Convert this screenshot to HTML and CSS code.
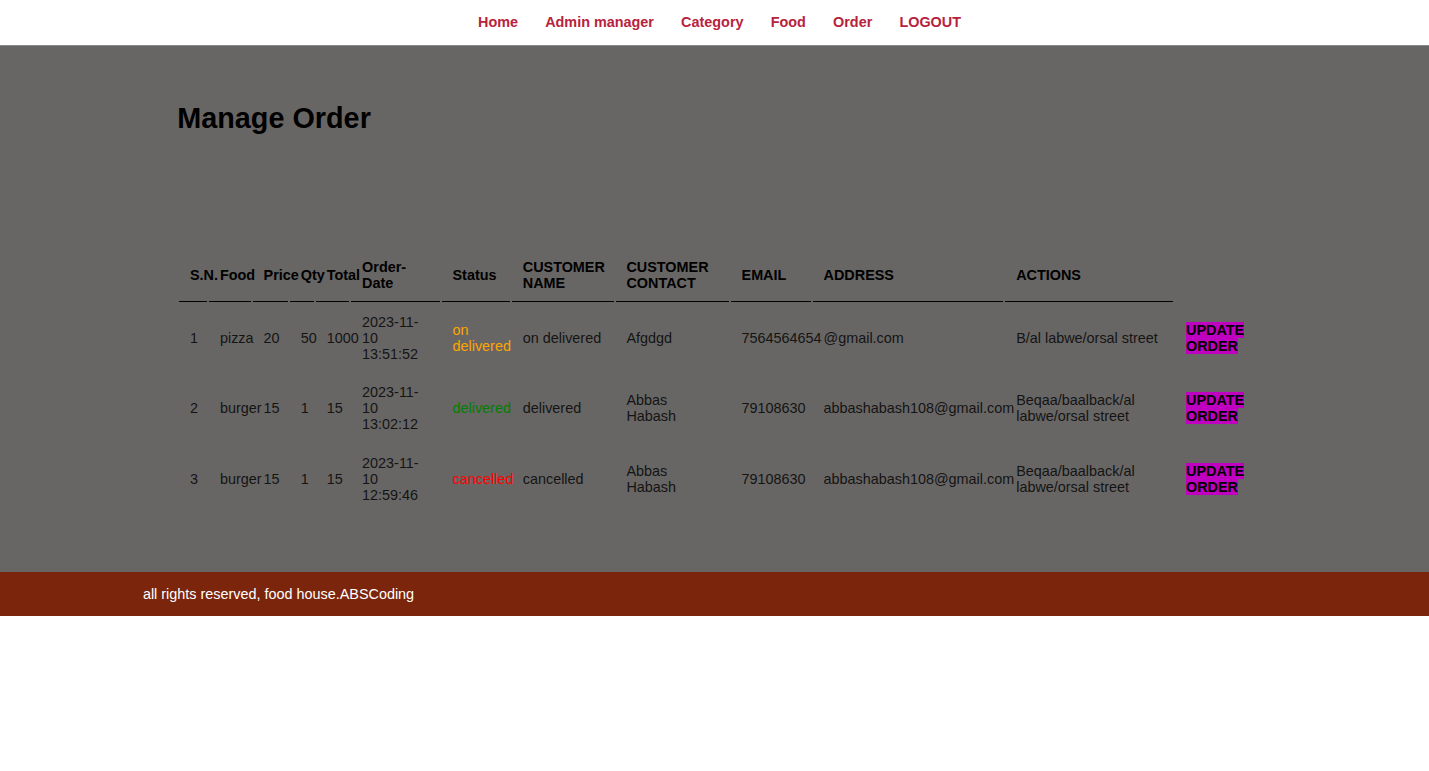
FILE: index.html
```html
<!DOCTYPE html>
<html lang="en">
<head>
<meta charset="utf-8">
<title>Manage Order</title>
<link rel="stylesheet" href="styles.css">
</head>
<body>
<div class="menu">
  <ul class="menu-list">
    <li><a href="#">Home</a></li>
    <li><a href="#">Admin manager</a></li>
    <li><a href="#">Category</a></li>
    <li><a href="#">Food</a></li>
    <li><a href="#">Order</a></li>
    <li><a href="#">LOGOUT</a></li>
  </ul>
</div>

<div class="main-content">
  <div class="wrapper">
    <div class="inner">
      <h1 class="title">Manage Order</h1>
      <table class="tbl-full">
        <tr>
          <th>S.N.</th>
          <th>Food</th>
          <th>Price</th>
          <th>Qty</th>
          <th>Total</th>
          <th>Order-Date</th>
          <th>Status</th>
          <th class="caps">CUSTOMER NAME</th>
          <th class="caps">CUSTOMER CONTACT</th>
          <th class="caps">EMAIL</th>
          <th class="caps">ADDRESS</th>
          <th class="caps">ACTIONS</th>
        </tr>
        <tr>
          <td>1</td>
          <td>pizza</td>
          <td>20</td>
          <td>50</td>
          <td>1000</td>
          <td>2023-11-10 13:51:52</td>
          <td><span class="st-orange">on delivered</span></td>
          <td>on delivered</td>
          <td>Afgdgd</td>
          <td>7564564654</td>
          <td>@gmail.com</td>
          <td>B/al labwe/orsal street</td>
          <td><a href="#" class="btn-update">UPDATE ORDER</a></td>
        </tr>
        <tr>
          <td>2</td>
          <td>burger</td>
          <td>15</td>
          <td>1</td>
          <td>15</td>
          <td>2023-11-10 13:02:12</td>
          <td><span class="st-green">delivered</span></td>
          <td>delivered</td>
          <td>Abbas Habash</td>
          <td>79108630</td>
          <td>abbashabash108@gmail.com</td>
          <td>Beqaa/baalback/al labwe/orsal street</td>
          <td><a href="#" class="btn-update">UPDATE ORDER</a></td>
        </tr>
        <tr>
          <td>3</td>
          <td>burger</td>
          <td>15</td>
          <td>1</td>
          <td>15</td>
          <td>2023-11-10 12:59:46</td>
          <td><span class="st-red">cancelled</span></td>
          <td>cancelled</td>
          <td>Abbas Habash</td>
          <td>79108630</td>
          <td>abbashabash108@gmail.com</td>
          <td>Beqaa/baalback/al labwe/orsal street</td>
          <td><a href="#" class="btn-update">UPDATE ORDER</a></td>
        </tr>
      </table>
    </div>
  </div>
</div>

<div class="footer">
  <div class="wrapper footer-wrap">
    <p class="footer-text">all rights reserved, food house.ABSCoding</p>
  </div>
</div>
</body>
</html>
```

FILE: styles.css
```css
* {
  box-sizing: content-box;
}

body {
  margin: 0;
  font-family: "Liberation Sans", Arial, sans-serif;
  font-size: 14.4px;
  color: #000;
  background: #fff;
}

.menu {
  background: #fff;
  border-bottom: 1px solid #8a8a8a;
  padding: 14.29px 0;
}

.menu-list {
  list-style: none;
  margin: 0;
  padding: 0 0 0 10px;
  display: flex;
  justify-content: center;
  gap: 27.2px;
}

.menu-list a {
  font-weight: bold;
  text-decoration: none;
  color: #b8223d;
}

.main-content {
  background: #686664;
  padding: 0 0 57px;
}

.wrapper {
  width: 80%;
  margin: 0 auto;
}

.inner {
  padding: 56px 27px 0 34.3px;
}

.title {
  font-size: 28.8px;
  margin: 0;
  color: #000;
}

.tbl-full {
  width: 100%;
  margin-top: 112px;
}

.tbl-full th {
  border-bottom: 1px solid #000;
  padding: 10.15px 1%;
  text-align: left;
  font-weight: bold;
}

.tbl-full td {
  padding: 10.15px 1%;
  color: #141414;
}

.st-orange {
  color: orange;
}

.st-green {
  color: green;
}

.st-red {
  color: red;
}

.btn-update {
  background: #c000c0;
  color: #000;
  font-weight: bold;
  text-decoration: none;
}

.footer {
  background: #7c250d;
}

.footer-wrap {
  padding: 14.29px 0;
}

.footer-text {
  margin: 0;
  color: #fff;
}
```
